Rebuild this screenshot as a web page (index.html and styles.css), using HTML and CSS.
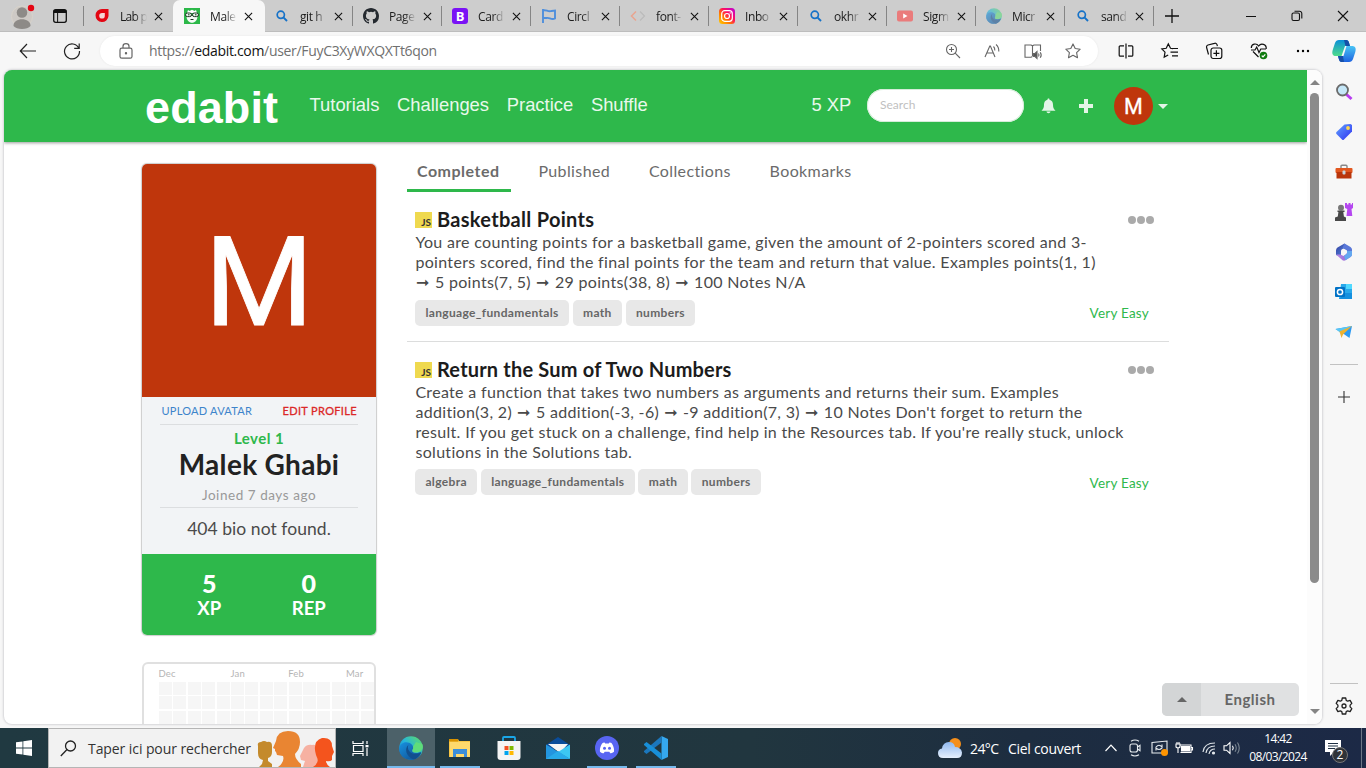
FILE: index.html
```html
<!DOCTYPE html>
<html lang="en">
<head>
<meta charset="utf-8">
<title>Malek Ghabi | Edabit</title>
<link rel="stylesheet" href="styles.css">
</head>
<body>
<svg width="0" height="0" class="defs">
  <defs>
    <linearGradient id="edgeA" x1="0" y1="1" x2="1" y2="0"><stop offset="0" stop-color="#0c6fc9"/><stop offset=".5" stop-color="#25b4dc"/><stop offset="1" stop-color="#66e15a"/></linearGradient>
    <linearGradient id="edgeB" x1="0" y1="0" x2="1" y2="1"><stop offset="0" stop-color="#1791e0"/><stop offset="1" stop-color="#114a8b"/></linearGradient>
    <linearGradient id="insta" x1="0" y1="1" x2="1" y2="0"><stop offset="0" stop-color="#ffd000"/><stop offset=".35" stop-color="#ff7a00"/><stop offset=".6" stop-color="#ff0f5d"/><stop offset="1" stop-color="#b800e0"/></linearGradient>
    <linearGradient id="copA" x1="0" y1="0" x2="0" y2="1"><stop offset="0" stop-color="#0a8fd8"/><stop offset="1" stop-color="#4fdc8b"/></linearGradient>
    <linearGradient id="copB" x1="0" y1="0" x2="0" y2="1"><stop offset="0" stop-color="#49c4f5"/><stop offset="1" stop-color="#1e63e0"/></linearGradient>
    <linearGradient id="tag" x1="0" y1="0" x2="1" y2="1"><stop offset="0" stop-color="#62a4ff"/><stop offset="1" stop-color="#2f2ff0"/></linearGradient>
    <linearGradient id="m365a" x1="0" y1="0" x2="1" y2="1"><stop offset="0" stop-color="#2f3f9e"/><stop offset="1" stop-color="#5f8fe8"/></linearGradient>
    <linearGradient id="m365b" x1="0" y1="0" x2="1" y2="0"><stop offset="0" stop-color="#b98be8"/><stop offset="1" stop-color="#8a5bd0"/></linearGradient>
    <linearGradient id="cloud" x1="0" y1="0" x2="0" y2="1"><stop offset="0" stop-color="#8fb8ee"/><stop offset="1" stop-color="#e6f0fd"/></linearGradient>
    <symbol id="edge" viewBox="0 0 24 24">
      <circle cx="12" cy="12" r="11.8" fill="url(#edgeA)"/>
      <path d="M.3 13C.8 7 6 5.2 10 6.8c3.500 1.300 4.800 4 3.900 6.400-.6 1.200-1 2.300.4 3.100 2.500 1.200 5.700.8 8-.8C20.400 20.700 16.500 23.800 12 23.800 5.500 23.800 0 19 .3 13z" fill="url(#edgeB)"/>
      <path d="M9.500 8.800C5.400 12 6.400 20.500 14.700 23.500c3.300-.7 6.300-3.400 7.800-7.300-3.500 2.600-9 2.500-11.700-.4C8.500 13.500 8.600 10.500 9.500 8.800z" fill="#12508f"/>
      <path d="M14 10.500c.8 1.900-.8 3.300-.7 4.400.4 2.200 5.600 2 8.100.3 3-1.900 2.700-5.500 1.900-7.200L17 6z" fill="#5fdc7a"/>
    </symbol>
    <symbol id="close" viewBox="0 0 10 10"><path d="M1 1l8 8M9 1L1 9" stroke="#111" stroke-width="1.200" fill="none"/></symbol>
    <symbol id="mag" viewBox="0 0 12 12"><circle cx="4.800" cy="4.800" r="3.600" fill="none" stroke="#1672c8" stroke-width="1.700"/><path d="M7.400 7.400L11 11" stroke="#1672c8" stroke-width="1.900"/></symbol>
  </defs>
</svg>

<div class="tabstrip">
  <svg class="profile" width="26" height="28" viewBox="0 0 26 28"><circle cx="12" cy="14.500" r="10.500" fill="#cdc9c5" stroke="#d8d3cb"/><circle cx="12" cy="10.500" r="5.300" fill="#8d8a87"/><path d="M3.500 24c-.5-9 17.500-9 17 0-3 4-14 4-17 0z" fill="#8d8a87"/><circle cx="21" cy="6" r="3.200" fill="#e40613"/></svg>
  <svg class="workspace" width="16" height="16" viewBox="0 0 16 16"><rect x="1.700" y="1.700" width="12.600" height="12.600" rx="2" fill="none" stroke="#111" stroke-width="1.300"/><path d="M2 2.500h12v2H2zM5.600 5v9" stroke="#111" fill="#111"/></svg>
  <div class="tab first"><svg class="fav" viewBox="0 0 16 16"><path d="M8 1h6.500v7A6.500 6.500 0 1 1 8 1z" fill="#e30613"/><path d="M8 5h2.800v3A2.800 2.800 0 1 1 8 5z" fill="#f5d5d5"/></svg><span class="tt">Lab p</span><svg class="x"><use href="#close"/></svg></div>
  <div class="tab active"><svg class="fav" viewBox="0 0 16 16"><path d="M0 0h16v16H0z" fill="#2cb849"/><path d="M2.500 8c0 9 11 9 11 0z" fill="#f5fbf6"/><path d="M3 5l1-3 1.500 1L8 1.800l2.500 1.200L12 2l1 3z" fill="#fff"/><rect x="1.500" y="5" width="6" height="3.600" rx="1.800" fill="#e8f5ea" stroke="#1d3323"/><rect x="8.500" y="5" width="6" height="3.600" rx="1.800" fill="#e8f5ea" stroke="#1d3323"/><path d="M4 6.800h1.500M11 6.800h1.500M6.500 11.500h3" stroke="#1d3323"/></svg><span class="tt">Male</span><svg class="x"><use href="#close"/></svg></div>
  <div class="tab"><svg class="fav small"><use href="#mag"/></svg><span class="tt">git h</span><svg class="x"><use href="#close"/></svg></div>
  <div class="tab"><svg class="fav" viewBox="0 0 16 16"><path fill="#24292f" d="M8 0C3.580 0 0 3.580 0 8c0 3.540 2.290 6.530 5.470 7.590.4.070.55-.17.55-.38 0-.19-.01-.82-.01-1.490-2.010.37-2.530-.49-2.690-.94-.09-.23-.48-.94-.82-1.130-.28-.15-.68-.52-.01-.53.63-.01 1.080.58 1.230.82.72 1.210 1.870.87 2.330.66.07-.52.28-.87.51-1.070-1.780-.2-3.640-.89-3.640-3.950 0-.87.31-1.590.82-2.150-.08-.2-.36-1.020.08-2.120 0 0 .67-.21 2.200.82a7.500 7.500 0 0 1 4 0c1.530-1.040 2.200-.82 2.200-.82.44 1.100.16 1.920.08 2.120.51.56.82 1.270.82 2.150 0 3.070-1.870 3.750-3.650 3.950.29.25.54.73.54 1.480 0 1.070-.01 1.930-.01 2.200 0 .21.15.46.55.38A8 8 0 0 0 16 8c0-4.420-3.580-8-8-8z"/></svg><span class="tt">Page</span><svg class="x"><use href="#close"/></svg></div>
  <div class="tab"><span class="fav boot">B</span><span class="tt">Card</span><svg class="x"><use href="#close"/></svg></div>
  <div class="tab"><svg class="fav" viewBox="0 0 16 16"><path d="M2 1v14M2 2.500c3-1.500 5 2 8.500.5l3.500-.5v8c-4 2-5.500-1.500-8.500-.5H2" fill="none" stroke="#4f8fdc" stroke-width="1.900"/></svg><span class="tt">Circl</span><svg class="x"><use href="#close"/></svg></div>
  <div class="tab"><svg class="fav" viewBox="0 0 16 16"><path d="M6 3.500L1.500 8 6 12.500" fill="none" stroke="#e9a48f" stroke-width="1.500"/><path d="M10 3.500L14.500 8 10 12.500" fill="none" stroke="#bbb" stroke-width="1.300"/></svg><span class="tt">font-</span><svg class="x"><use href="#close"/></svg></div>
  <div class="tab"><svg class="fav" viewBox="0 0 16 16"><rect width="16" height="16" rx="3.500" fill="url(#insta)"/><rect x="2.700" y="2.700" width="10.600" height="10.600" rx="3" fill="none" stroke="#fff" stroke-width="1.200"/><circle cx="8" cy="8" r="2.500" fill="none" stroke="#fff" stroke-width="1.200"/><circle cx="11.200" cy="4.900" r=".7" fill="#fff"/></svg><span class="tt">Inbo</span><svg class="x"><use href="#close"/></svg></div>
  <div class="tab"><svg class="fav small"><use href="#mag"/></svg><span class="tt">okhr</span><svg class="x"><use href="#close"/></svg></div>
  <div class="tab"><svg class="fav" viewBox="0 0 16 16"><rect y="2.500" width="16" height="11" rx="2" fill="#ea7b7b"/><path d="M6.200 5.500v5L10.500 8z" fill="#fff"/></svg><span class="tt">Sigm</span><svg class="x"><use href="#close"/></svg></div>
  <div class="tab"><svg class="fav faded"><use href="#edge"/></svg><span class="tt">Micr</span><svg class="x"><use href="#close"/></svg></div>
  <div class="tab"><svg class="fav small"><use href="#mag"/></svg><span class="tt">sand</span><svg class="x"><use href="#close"/></svg></div>
  <svg class="newtab" width="16" height="16" viewBox="0 0 16 16"><path d="M8 1v14M1 8h14" stroke="#111" stroke-width="1.300"/></svg>
  <div class="winctl">
    <svg width="12" height="12" viewBox="0 0 12 12"><path d="M1 6.500h10" stroke="#111"/></svg>
    <svg width="12" height="12" viewBox="0 0 12 12" fill="none" stroke="#111" stroke-width="1.100"><rect x="1" y="3" width="7.500" height="7.500" rx="1.500"/><path d="M3.500 1.200h5a2.300 2.300 0 0 1 2.300 2.300v5"/></svg>
    <svg width="12" height="12" viewBox="0 0 12 12"><path d="M1 1l10 10M11 1L1 11" stroke="#111" stroke-width="1.100"/></svg>
  </div>
</div>

<div class="toolbar">
  <svg class="back" width="18" height="16" viewBox="0 0 18 16"><path d="M17 8H1.500M8 1L1.300 8 8 15" fill="none" stroke="#222" stroke-width="1.200"/></svg>
  <svg class="reload" width="18" height="18" viewBox="0 0 18 18"><path d="M15.800 6.200A7.500 7.500 0 1 0 16.500 9M16.200 1.500v4.800h-5" fill="none" stroke="#222" stroke-width="1.200"/></svg>
  <div class="address">
    <svg class="lock" width="14" height="16" viewBox="0 0 14 16" fill="none" stroke="#666" stroke-width="1.200"><rect x="1" y="5.200" width="12" height="10" rx="1.800"/><path d="M4 5V3.200a3 2.600 0 0 1 6 0V5"/><circle cx="7" cy="10.200" r=".6" fill="#666"/></svg>
    <span class="url">https://<b>edabit.com</b>/user/FuyC3XyWXQXTt6qon</span>
    <div class="addricons">
      <svg width="16" height="16" viewBox="0 0 16 16" fill="none" stroke="#666" stroke-width="1.100"><circle cx="6.500" cy="6.500" r="5"/><path d="M10.200 10.200L15 15M4 6.500h5M6.500 4v5"/></svg>
      <svg width="16" height="16" viewBox="0 0 16 16" fill="none" stroke="#666" stroke-width="1.100"><path d="M1 14L5.800 3h.6L11 14M2.800 10h6.600M9.500 3.500q1.500 1.500 1.300 4M12 1.500q3 2.500 2.800 7"/></svg>
      <svg width="18" height="16" viewBox="0 0 18 16" fill="none" stroke="#666" stroke-width="1.100"><path d="M8.500 13.500L7 14.200H1V2h6l1.500.8L10 2h6.500v6M8.500 3v10"/><path d="M9.500 10.500h1.500l2-2v7l-2-2H9.500z" fill="#555"/><path d="M14.500 10.500q1 1.500 0 3M16.200 9.200q2 2.800 0 5.600"/></svg>
      <svg width="16" height="16" viewBox="0 0 16 16" fill="none" stroke="#666" stroke-width="1.100"><path d="M8 .9l2.200 4.600 5 .7-3.600 3.500.9 5L8 12.300l-4.500 2.400.9-5L.8 6.200l5-.7z" stroke-linejoin="round"/></svg>
    </div>
  </div>
  <div class="toolicons">
    <svg width="16" height="16" viewBox="0 0 16 16" fill="none" stroke="#111" stroke-width="1.200"><path d="M6 2.800H2.200a1 1 0 0 0-1 1v8.400a1 1 0 0 0 1 1H6M10 2.800h3.800a1 1 0 0 1 1 1v8.400a1 1 0 0 1-1 1H10M8 .5v15"/></svg>
    <svg width="18" height="16" viewBox="0 0 18 16" fill="none" stroke="#111" stroke-width="1.200"><path d="M12 5.600L9.500 5.300 7.300.9 5.200 5.300l-4.400.7 3.200 3.200-.8 4.900 4-2.100M10.500 5.500h6.500M9.500 9.200h7.500M11 12.800h6"/></svg>
    <svg width="18" height="18" viewBox="0 0 18 18" fill="none" stroke="#111" stroke-width="1.200"><path d="M3.500 12.500L1.600 5.500A2 2 0 0 1 3 3l6.500-1.700A2 2 0 0 1 12 2.700l.4 1.500"/><rect x="6" y="6" width="10.800" height="10.500" rx="2.200"/><path d="M11.400 8.300v6M8.400 11.300h6"/></svg>
    <svg width="18" height="18" viewBox="0 0 18 18" fill="none" stroke="#111" stroke-width="1.200"><path d="M8.500 15L3 9.500M1.300 6C1.300 1.500 6.500.8 8.700 4c2.200-3.200 8-2 7.500 3M1 8h4l1.700-3L9 10.500 10.800 7H16"/><circle cx="13.500" cy="13.500" r="3.800" fill="#0f7b0f" stroke="none"/><path d="M11.700 13.600l1.300 1.200 2.300-2.500" stroke="#fff"/></svg>
    <svg width="16" height="16" viewBox="0 0 16 16"><circle cx="3" cy="8" r="1.200"/><circle cx="8" cy="8" r="1.200"/><circle cx="13" cy="8" r="1.200"/></svg>
  </div>
  <svg class="copilot" width="24" height="24" viewBox="0 0 24 24"><path d="M7 1h7c2 0 2.500 1 3 3l1 3h-5L9.500 17H4c-3 0-4.500-2-3.300-6L3 4c.7-2 2-3 4-3z" fill="url(#copA)"/><path d="M17 23h-7c-2 0-2.500-1-3-3l-1-3h5.500L14.500 7H20c3 0 4.500 2 3.300 6L21 20c-.7 2-2 3-4 3z" fill="url(#copB)"/><path d="M12 1h2.500c2 0 2.500 2 3.500 6h-4.500zM6 17h5l1 6H10c-2 0-3-1-4-6z" fill="#164fa8"/></svg>
</div>

<div class="middle">
  <div class="viewport">
    <div class="page">
      <header class="header">
        <span class="logo">edabit</span>
        <nav class="nav"><a>Tutorials</a><a>Challenges</a><a>Practice</a><a>Shuffle</a></nav>
        <span class="xp">5 XP</span>
        <span class="search">Search</span>
        <svg class="bell" width="15" height="16" viewBox="0 0 15 16"><path d="M7.500.5c.8 0 1 .5 1 1.200 2.500.7 3.500 2.500 3.500 5 0 3 .8 4.500 2.500 6H.5C2.200 11.200 3 9.700 3 6.700c0-2.500 1-4.300 3.500-5 0-.7.200-1.200 1-1.200zM5.500 13.500h4c-.2 2.300-3.800 2.300-4 0z" fill="#e3f5e7"/></svg>
        <svg class="plus" width="14" height="14" viewBox="0 0 14 14"><path d="M5 0h4v5h5v4H9v5H5V9H0V5h5z" fill="#e3f5e7"/></svg>
        <span class="avatar">M</span><i class="caret"></i>
      </header>
      <div class="content">
        <aside class="side">
          <section class="card">
            <div class="photo">M</div>
            <div class="info">
              <div class="links"><span class="upload">UPLOAD AVATAR</span><span class="edit">EDIT PROFILE</span></div>
              <div class="level">Level 1</div>
              <div class="name">Malek Ghabi</div>
              <div class="joined">Joined 7 days ago</div>
              <div class="bio">404 bio not found.</div>
            </div>
            <div class="stats"><div><b>5</b><span>XP</span></div><div><b>0</b><span>REP</span></div></div>
          </section>
          <section class="heat"><div class="months"><span>Dec</span><span>Jan</span><span>Feb</span><span>Mar</span></div><div class="cells"></div></section>
        </aside>
        <main class="main">
          <div class="ptabs"><span class="on">Completed</span><span>Published</span><span>Collections</span><span>Bookmarks</span></div>
          <article class="item">
            <div class="title"><span class="js">JS</span><h2 class="wide">Basketball Points</h2><span class="dots"><i></i><i></i><i></i></span></div>
            <p>You are counting points for a basketball game, given the amount of 2-pointers scored and 3-<br>pointers scored, find the final points for the team and return that value. Examples points(1, 1)<br><s>➞</s> 5 points(7, 5) <s>➞</s> 29 points(38, 8) <s>➞</s> 100 Notes N/A</p>
            <div class="tags"><span>language_fundamentals</span><span>math</span><span>numbers</span><em>Very Easy</em></div>
          </article>
          <article class="item">
            <div class="title"><span class="js">JS</span><h2>Return the Sum of Two Numbers</h2><span class="dots"><i></i><i></i><i></i></span></div>
            <p>Create a function that takes two numbers as arguments and returns their sum. Examples<br>addition(3, 2) <s>➞</s> 5 addition(-3, -6) <s>➞</s> -9 addition(7, 3) <s>➞</s> 10 Notes Don't forget to return the<br>result. If you get stuck on a challenge, find help in the Resources tab. If you're really stuck, unlock<br>solutions in the Solutions tab.</p>
            <div class="tags"><span>algebra</span><span>language_fundamentals</span><span>math</span><span>numbers</span><em>Very Easy</em></div>
          </article>
        </main>
      </div>
      <div class="lang"><span class="langup"><i></i></span><span class="langname">English</span></div>
    </div>
    <div class="scroll"><i class="up"></i><div class="thumb"></div><i class="down"></i></div>
  </div>
  <div class="rail">
    <svg viewBox="0 0 18 18"><path d="M11 11l5.500 5" stroke="#b83cf0" stroke-width="3"/><circle cx="7.500" cy="7" r="5.500" fill="#c5e7f8" stroke="#6b6b6b" stroke-width="1.800"/></svg>
    <svg viewBox="0 0 18 18"><path d="M9.500 1.500l6-.5 1.500 1v6.500L9 16.500q-1 1-2 0L1.500 11q-1-1 0-2z" fill="url(#tag)"/><circle cx="13" cy="5" r="1.900" fill="#ffd64d"/></svg>
    <svg viewBox="0 0 18 18"><path d="M6 5.500V3.200q0-1 1-1h4q1 0 1 1v2.300" fill="none" stroke="#888" stroke-width="1.400"/><rect x=".5" y="5" width="17" height="5" rx="1" fill="#e2571f"/><path d="M1.500 9h15v6.500h-15z" fill="#b9350b"/><rect x="7.500" y="7.500" width="3" height="4" rx="1" fill="#c9d3da"/></svg>
    <svg viewBox="0 0 18 18"><path d="M10 0h2v1.500h1.500V0h2v1.500H17V0h1v5l-1.500 1 .8 7h-5.800l.8-7L10 5z" fill="#b547f0"/><circle cx="6" cy="4.800" r="3" fill="#777"/><path d="M2.500 7.500h7v1.600H8.300l.6 4.400 2.100 1V18H0v-3.500l2.800-1 .6-4.400H2.500z" fill="#484848"/></svg>
    <svg viewBox="0 0 18 18"><path d="M9.500.5L2.500 4.500Q1 5.500 1 7.500v4.500l5 2V8q0-1.500 1.500-2L12 3.500z" fill="url(#m365a)"/><path d="M9.500.5l6 3.500Q17 5 17 6.500V11l-5-1V7.500L7.500 5z" fill="#5a78d8"/><path d="M1 11.500l6.500 5.800q1.500.9 3 0L15.500 14q1.500-1 1.500-3V8l-5 2-3.500 3-3-1.500z" fill="url(#m365b)"/><path d="M17 8v4q0 1-1.500 2l-5 3.300L9 13l3-2.500V8z" fill="#63a8f0"/><circle cx="9" cy="9" r="2.600" fill="#f7f7f7"/></svg>
    <svg viewBox="0 0 18 18"><path d="M6 1h11v15H4z" fill="#28a8ea"/><path d="M11 1h6v5h-6z" fill="#50d9ff"/><path d="M4 16l6-6h7v6z" fill="#1490df"/><rect y="4" width="10" height="10" rx="1" fill="#0072c6"/><circle cx="5" cy="9" r="2.600" fill="none" stroke="#fff" stroke-width="1.500"/></svg>
    <svg viewBox="0 0 18 18"><path d="M.5 6L17 3l-2.500 12-5-3.500z" fill="#2b9af3"/><path d="M.5 6L17 3 5 9.500z" fill="#58c6f5"/><path d="M4.500 8.500L17 3 8 11.500 6.500 15z" fill="#edb231"/></svg>
    <hr>
    <svg class="add" viewBox="0 0 18 18"><path d="M9 3v12M3 9h12" stroke="#333" stroke-width="1.100"/></svg>
    <hr class="low">
    <svg class="gear" viewBox="0 0 18 18" fill="none" stroke="#222" stroke-width="1.300" stroke-linejoin="round"><path d="M7.300 1h3.400l.5 2.400 1.500.8 2.400-.8 1.700 3-1.700 1.700v1.800l1.700 1.700-1.700 3-2.400-.8-1.500.8-.5 2.400H7.300l-.5-2.400-1.500-.8-2.400.8-1.700-3 1.700-1.700V8.100L1.200 6.400l1.700-3 2.400.8 1.500-.8z"/><circle cx="9" cy="9" r="2"/></svg>
  </div>
</div>

<div class="taskbar">
  <div class="start"><svg width="16" height="16" viewBox="0 0 16 16" fill="#fff"><path d="M0 2.300L6.500 1.400v6.100H0zM7.300 1.300L16 0v7.500H7.300zM0 8.400h6.500v6.200L0 13.700zM7.300 8.400H16V16l-8.700-1.300z"/></svg></div>
  <div class="tasksearch">
    <svg width="17" height="17" viewBox="0 0 17 17" fill="none" stroke="#222" stroke-width="1.300"><circle cx="10.500" cy="6" r="5"/><path d="M7 9.500L.8 16"/></svg>
    <span>Taper ici pour rechercher</span>
    <svg class="people" width="80" height="38" viewBox="0 0 80 38"><path d="M3 16q-1-4 3-4 3-2 6 0 5-1 5 4v6q0 5-4 6v3l4 3v3H4l3-3 1-4q-5-1-5-7z" fill="#c48a2c"/><path d="M49 18q3-4 8-3 5-1 5 5v17H48l2-6-4-1-1-4 2-4z" fill="#f6b1a2"/><path d="M21 11Q22 1 33 1q12 0 12 11 0 7-5 12 0 5 6 10v3H23q7-5 5-11l-6-1-1-3-1-1v-2l-2-1z" fill="#e98532"/><path d="M58 37q7-4 3-12-4-14 6-17 10-1 10 8l2 6-2 4v4q-2 2-6 1 0 3 4 6z" fill="#f4541d"/></svg>
  </div>
  <div class="taskview"><svg width="17" height="17" viewBox="0 0 17 17" fill="none" stroke="#fff" stroke-width="1.200"><path d="M1 1v2.500h10V1M1 16v-2.500h10V16M1.500 5.500h9.500v6H1.500zM15 1v3M15 8v8"/><path d="M13.500 5h3v2.300h-3z" fill="#fff" stroke="none"/></svg></div>
  <div class="app cur"><svg width="24" height="24"><use href="#edge"/></svg></div>
  <div class="app run"><svg width="24" height="24" viewBox="0 0 24 24"><path d="M1 3h9l1 2h11v16H1z" fill="#f8c544"/><path d="M1 3h9v2.500H1z" fill="#d99200"/><path d="M2 6h20v15H2z" fill="#ffd96c"/><path d="M5 13h14v8h-3v-3H8v3H5z" fill="#3c8ed9"/></svg></div>
  <div class="app"><svg width="24" height="24" viewBox="0 0 24 24"><path d="M6 5V2q0-1 1-1h10q1 0 1 1v3" fill="none" stroke="#1aa7e8" stroke-width="1.800"/><path d="M.5 5h23v16q0 3-3 3h-17q-3 0-3-3z" fill="#f4f4f4"/><path d="M7.500 10h4v4h-4z" fill="#f25022"/><path d="M12.500 10h4v4h-4z" fill="#7fba00"/><path d="M7.500 15h4v4h-4z" fill="#00a4ef"/><path d="M12.500 15h4v4h-4z" fill="#ffb900"/></svg></div>
  <div class="app"><svg width="24" height="24" viewBox="0 0 24 24"><path d="M0 9l12-8 12 8v4H0z" fill="#0a4c9a"/><path d="M2 8h20l-8 9z" fill="#f5f5f5"/><path d="M0 8.500L24 23H0z" fill="#2395df"/><path d="M24 8.500L12 16l12 7z" fill="#3cc7f2"/><path d="M0 23l12-8 12 8z" fill="#28aae9"/></svg></div>
  <div class="app run"><svg width="24" height="24" viewBox="0 0 24 24"><circle cx="12" cy="12" r="12" fill="#5865f2"/><path d="M8 6.800l1.600-.4.600 1h3.600l.6-1 1.600.4c1.800 1.300 3.500 5.500 3 9-1.500 1.200-3 1.500-3.700 1.500l-1-1.500H9.700l-1 1.500c-1 0-2.500-.5-3.700-1.500-.5-4 1.500-8 3-9z" fill="#fff"/><circle cx="9.500" cy="12.300" r="1.500" fill="#5865f2"/><circle cx="14.500" cy="12.300" r="1.500" fill="#5865f2"/></svg></div>
  <div class="app run"><svg width="24" height="24" viewBox="0 0 24 24"><path d="M17.500 0L24 3v18l-6.500 3z" fill="#35a8ef"/><path d="M17.500 0v6.500L2.500 18 0 16v-1z" fill="#1b77bd"/><path d="M17.500 24v-6.500L2.500 6 0 8v1z" fill="#188fd8"/></svg></div>
  <div class="tray">
    <svg class="weather" width="26" height="22" viewBox="0 0 26 22"><circle cx="18" cy="7" r="6" fill="#f58f1b"/><path d="M6 21q-5 0-5-5 0-4 4-4.500Q6 5 12 5q5 0 6 5 6 0 7 5.500 0 5.500-5 5.500z" fill="url(#cloud)"/></svg>
    <span class="temp">24°C</span><span class="sky">Ciel couvert</span>
    <svg class="chev" width="12" height="8" viewBox="0 0 12 8"><path d="M.5 7L6 1.200 11.500 7" fill="none" stroke="#fff" stroke-width="1.200"/></svg>
    <svg class="t1" width="16" height="18" viewBox="0 0 16 18" fill="none" stroke="#e8edf0" stroke-width="1.100"><rect x="3" y="5" width="7.500" height="8" rx="2"/><path d="M10.500 8l2.500-1.800v5.600L10.500 10M4 2.200q4-2.500 8 0M4 15.800q4 2.500 8 0"/></svg>
    <svg class="t2" width="18" height="18" viewBox="0 0 18 18" fill="none" stroke="#e8edf0" stroke-width="1.100"><path d="M1 3.500L16 2v12H1zM5 8q3-3.500 6 0V5.500M11 9q-3 3-6 0v2.500"/><circle cx="13.500" cy="13.500" r="3.500" fill="#ff9500" stroke="none"/></svg>
    <svg class="t3" width="18" height="14" viewBox="0 0 18 14" fill="none" stroke="#fff" stroke-width="1.100"><path d="M5 4h11v7.500H5.500M16 6.500h1.500v2.500H16"/><path d="M6.500 5.500h8v4.500h-8z" fill="#fff"/><path d="M1 3h4v3Q3 8 1 6zM2 1v2M4 1v2M3 7v5"/></svg>
    <svg class="t4" width="14" height="14" viewBox="0 0 14 14" fill="none" stroke="#dce2e7" stroke-width="1.200"><path d="M1 11Q2 2 13 2M4 12Q5 5 13 5M7 13Q8 8 13 8"/><circle cx="11.500" cy="12" r="1" fill="#fff"/></svg>
    <svg class="t5" width="18" height="14" viewBox="0 0 18 14" fill="none" stroke="#fff" stroke-width="1.100"><path d="M1 4.800h2.500L7 1.500v11L3.500 9.200H1zM9.500 4.800q1.500 2.200 0 4.400"/><path d="M12 3.200q2.500 3.800 0 7.600M14.500 1.500q3.500 5.500 0 11" stroke="#7b8793"/></svg>
    <div class="clock"><span>14:42</span><span>08/03/2024</span></div>
    <div class="notif"><svg width="17" height="17" viewBox="0 0 17 17"><path d="M0 0h16v12H9l-4 4v-4H0z" fill="#fff"/><path d="M3 3.500h10M3 6h10M3 8.500h7" stroke="#1f3043"/></svg><span>2</span></div>
    <i class="desk"></i>
  </div>
</div>
</body>
</html>
```
FILE: styles.css
```css
* { box-sizing: border-box; }
body { margin: 0; width: 1366px; height: 768px; overflow: hidden; display: flex; flex-direction: column; background: #f7f7f7; font-family: "Open Sans", "Noto Sans", sans-serif; }
.defs { position: absolute; }
svg { display: block; flex: none; overflow: visible; }

/* Tab strip */
.tabstrip { height: 32px; flex: none; display: flex; align-items: center; background: #cdcdcd; box-shadow: inset 0 -1px #bdbdbd; }
.profile { margin-left: 10px; }
.workspace { margin-left: 16px; margin-right: 16px; }
.tab { width: 89px; height: 32px; display: flex; align-items: center; padding-left: 10px; font-size: 12px; color: #1b1b1b; position: relative; flex: none; }
.tab::after { content: ""; position: absolute; right: 0; top: 6px; width: 1px; height: 20px; background: #858585; }
.tab.first::before { content: ""; position: absolute; left: -1px; top: 6px; width: 1px; height: 20px; background: #858585; }
.tab.first::after, .tab.active::after { display: none; }
.tab.active { width: 92px; background: #f7f7f7; border-radius: 7px 7px 0 0; margin-right: -1px; padding-left: 11px; }
.fav { width: 16px; height: 16px; flex: none; }
.fav.small { width: 12px; height: 12px; margin: 0 2px; }
.fav.faded { opacity: .6; }
.fav.boot { border-radius: 3px; background: #7a12f5; color: #fff; text-align: center; font: bold 13px/16px "Open Sans", sans-serif; }
.tt { width: 27px; margin: 0 7px 0 10px; white-space: nowrap; overflow: hidden; letter-spacing: -.4px; -webkit-mask-image: linear-gradient(90deg, #000 55%, transparent 100%); mask-image: linear-gradient(90deg, #000 55%, transparent 100%); }
.first .tt { letter-spacing: -.7px; }
.x { width: 9px; height: 9px; }
.newtab { margin-left: 10px; }
.winctl { margin-left: auto; display: flex; gap: 34px; margin-right: 17px; }

/* Toolbar */
.toolbar { height: 38px; flex: none; display: flex; align-items: center; background: #f7f7f7; }
.back { margin-left: 19px; }
.reload { margin-left: 26px; }
.address { margin-left: 19px; width: 998px; height: 30px; border-radius: 15px; background: #fff; display: flex; align-items: center; padding-left: 19px; box-shadow: 0 0 2px #e5e5e5; }
.url { margin-left: 16px; font-size: 14px; color: #707070; letter-spacing: -.32px; white-space: nowrap; padding-bottom: 1px; }
.url b { color: #111; font-weight: 400; }
.addricons { margin-left: auto; margin-right: 17px; display: flex; gap: 23.500px; align-items: center; }
.toolicons { display: flex; gap: 26.700px; margin-left: 20px; align-items: center; }
.copilot { margin-left: 21.200px; }

/* Window body */
.middle { height: 658px; flex: none; display: flex; padding-left: 4px; }
.viewport { width: 1318px; height: 654px; border-radius: 8px; overflow: hidden; background: #fff; display: flex; box-shadow: 0 0 2px 1px #d5d5d8; }
.page { width: 1303px; position: relative; overflow: hidden; font-family: Lato, sans-serif; }
.header { height: 72px; background: #2eb84b; display: flex; align-items: center; box-shadow: 0 1px 3px rgba(0,0,0,.4); position: relative; font-family: "Liberation Sans", Arial, sans-serif; color: #e9f8ec; white-space: nowrap; }
.logo { margin-left: 141px; width: 164.500px; font-size: 45px; font-weight: 700; color: #fff; line-height: 72px; padding-top: 4px; letter-spacing: .1px; }
.nav { display: flex; gap: 17.700px; font-size: 18.400px; width: 502px; padding-bottom: 2px; }
.xp { font-size: 18.400px; width: 55.500px; padding-bottom: 2px; }
.search { width: 157px; height: 33px; border-radius: 17px; background: #fff; color: #bfbfbf; font: 12px/31px Lato, sans-serif; padding-left: 13px; box-shadow: inset 0 0 0 1px #d5ecd9; margin-bottom: 1px; }
.bell { margin-left: 17px; margin-bottom: 1px; }
.plus { margin-left: 23px; margin-bottom: 1px; }
.avatar { margin-left: 21px; width: 39px; height: 38px; border-radius: 50%; background: #bf360c; color: #fff; font: 400 21.500px/39px Roboto, sans-serif; text-align: center; -webkit-text-stroke: .3px #fff; }
.caret { margin-left: 5px; border: 5px solid transparent; border-top-color: #e3f5e7; border-bottom: 0; }
.content { display: flex; padding: 22px 0 0 138px; }
.side { width: 234px; }
.card { border-radius: 5px; overflow: hidden; box-shadow: 0 0 1px 1px #ccc; height: 471px; text-align: center; }
.photo { height: 233px; background: #bf360c; color: #fff; font: 400 125px/238px Roboto, sans-serif; -webkit-text-stroke: .8px #fff; }
.info { height: 157px; background: #f2f4f6; padding: 0 18px; }
.links { height: 28px; border-bottom: 1px solid #dcdee0; display: flex; justify-content: space-between; padding: 0 1px 0 1.500px; font-size: 11px; line-height: 28px; letter-spacing: .25px; }
.upload { color: #3d84cb; }
.edit { color: #db2828; -webkit-text-stroke: .3px #db2828; letter-spacing: .35px; }
.level { color: #2eb84b; font-weight: 700; font-size: 15px; line-height: 20px; height: 22px; padding-top: 3px; letter-spacing: .45px; }
.name { font-size: 28px; font-weight: 700; color: #222; line-height: 34px; height: 39px; letter-spacing: .3px; }
.joined { height: 22px; border-bottom: 1px solid #dcdee0; color: #999; font-size: 13.500px; line-height: 18px; letter-spacing: .55px; }
.bio { color: #4a4a4a; font-size: 17.500px; line-height: 41px; letter-spacing: .05px; }
.stats { height: 81px; background: #2eb84b; color: #fff; display: flex; justify-content: center; padding: 14px 0 0 0; font-weight: 700; }
.stats div { width: 99.500px; display: flex; flex-direction: column; }
.stats b { font-size: 25px; line-height: 30px; }
.stats span { font-size: 18.500px; line-height: 22px; margin-top: -1px; }
.heat { margin-top: 27px; height: 150px; border: 2px solid #e0e0e0; border-radius: 6px; padding: 3px 0 0 14.500px; overflow: hidden; }
.months { display: flex; font-size: 9.500px; color: #b5b5b5; line-height: 13px; height: 15px; letter-spacing: .2px; }
.months span { flex: none; width: 57.700px; }
.months span:first-child { width: 72px; }
.months span:last-child { width: 30px; }
.cells { height: 120px; background: repeating-linear-gradient(90deg, transparent 0 13px, #fff 13px 14.400px), repeating-linear-gradient(#f6f6f6 0 13px, #fff 13px 14.400px); }
.main { margin-left: 31px; width: 762px; }
.ptabs { height: 28px; display: flex; font-size: 16px; color: #6b6b6b; letter-spacing: .38px; line-height: 14px; white-space: nowrap; }
.ptabs span { margin-right: 16px; padding: 0 11.400px; }
.ptabs .on { width: 104px; padding: 0 0 0 10px; font-weight: 700; border-bottom: 3px solid #2eb84b; letter-spacing: .5px; }
.item { height: 150px; border-bottom: 1px solid #dcdddd; padding: 15px 0 0 8px; }
.item + .item { border: 0; }
.title { display: flex; align-items: center; height: 25px; }
.js { width: 17px; height: 16px; background: #efd94f; color: #333; font: bold 10px/21px Lato, sans-serif; text-align: right; padding-right: 1px; margin-top: 1px; }
h2 { margin: 0 0 0 5px; font-size: 20px; line-height: 25px; color: #1c1c1c; white-space: nowrap; letter-spacing: .18px; }
h2.wide { letter-spacing: .3px; }
.dots { margin: 0 15px 0 auto; display: flex; gap: 1px; }
.dots i { width: 8px; height: 8px; border-radius: 50%; background: #aaa; }
.item p { margin: 0; padding-left: .4px; font-size: 16px; line-height: 20px; color: #4a4a4a; letter-spacing: .32px; white-space: nowrap; }
.item s { text-decoration: none; font-family: "DejaVu Sans", sans-serif; line-height: 1; margin: 0 .7px; }
.tags { display: flex; gap: 3.500px; margin-top: 8px; height: 26px; }
.item + .item .tags { margin-top: 7px; }
.tags span { padding: 0 10.400px; line-height: 26px; border-radius: 5px; background: #e8e8e8; color: #666; font-size: 12px; font-weight: 700; letter-spacing: .35px; }
.tags em { margin-left: auto; margin-right: 20px; color: #2eb84b; font-style: normal; font-size: 13.500px; line-height: 27px; letter-spacing: .23px; }
.item + .item .tags em { line-height: 29px; }
.lang { position: absolute; right: 8px; bottom: 8px; width: 137px; height: 33px; border-radius: 5px; overflow: hidden; display: flex; align-items: center; background: #e0e1e2; color: #666; font-weight: 700; font-size: 15px; letter-spacing: .5px; }
.langup { width: 39px; height: 33px; background: #d3d5d6; display: flex; align-items: center; justify-content: center; }
.langup i { border: 5px solid transparent; border-bottom-color: #666; border-top: 0; }
.langname { flex: 1; text-align: center; padding-bottom: 1px; }
.scroll { width: 15px; background: #fcfcfc; display: flex; flex-direction: column; align-items: center; }
.up { margin-top: 10px; border: 5px solid transparent; border-bottom-color: #858585; border-top: 0; }
.thumb { width: 9px; height: 490px; border-radius: 5px; background: #8b8b8b; margin-top: 8px; }
.down { border: 5px solid transparent; border-top-color: #858585; border-bottom: 0; margin-top: 126px; }
.rail { width: 44px; display: flex; flex-direction: column; align-items: center; padding-top: 13px; }
.rail svg { width: 18px; height: 18px; margin-bottom: 22px; }
.rail hr { width: 28px; height: 1px; border: 0; background: #c2c2c2; margin: 1px 0 23px; flex: none; }
.rail svg.add { margin-bottom: 0; }
.rail hr.low { margin: 277px 0 13px; }

/* Taskbar */
.taskbar { height: 40px; flex: none; display: flex; background: linear-gradient(90deg, #203941, #21363f 55%, #1d2d40 75%, #1c2946); color: #fff; }
.start { width: 48px; display: flex; align-items: center; justify-content: center; }
.tasksearch { width: 288px; background: #f2f2f2; border: 1px solid #b5b5b5; display: flex; align-items: center; padding-left: 11px; font-size: 14px; color: #333; position: relative; white-space: nowrap; }
.tasksearch span { margin-left: 11px; letter-spacing: -.08px; }
.people { position: absolute; right: 0; top: 1px; }
.taskview { width: 51px; display: flex; align-items: center; justify-content: center; padding-right: 3px; }
.app { width: 49px; display: flex; align-items: center; justify-content: center; }
.app.cur { width: 48px; background: #4c6169; box-shadow: inset 0 -2px #76b9ed; }
.app.run { background: linear-gradient(#76b9ed, #76b9ed) center bottom / 40px 2px no-repeat; }
.tray { margin-left: auto; width: 429px; display: flex; align-items: center; font-size: 14px; white-space: nowrap; }
.temp { margin-left: 7px; width: 38px; letter-spacing: -.6px; }
.sky { width: 97px; letter-spacing: -.3px; }
.t1 { margin-left: 10px; }
.t2 { margin-left: 8px; }
.t3 { margin-left: 6px; }
.t4 { margin-left: 9px; }
.t5 { margin-left: 7px; }
.clock { margin-left: 6px; width: 62px; display: flex; flex-direction: column; align-items: center; font-size: 12px; line-height: 18px; letter-spacing: -.6px; }
.notif { margin-left: 16px; position: relative; }
.notif span { position: absolute; left: 7px; top: 7px; width: 16px; height: 16px; border-radius: 50%; background: #2f3338; border: 1px solid #777; font-size: 12px; line-height: 14px; text-align: center; }
.desk { margin-left: auto; width: 1px; height: 40px; margin-right: 4px; background: #6b7686; }
```
